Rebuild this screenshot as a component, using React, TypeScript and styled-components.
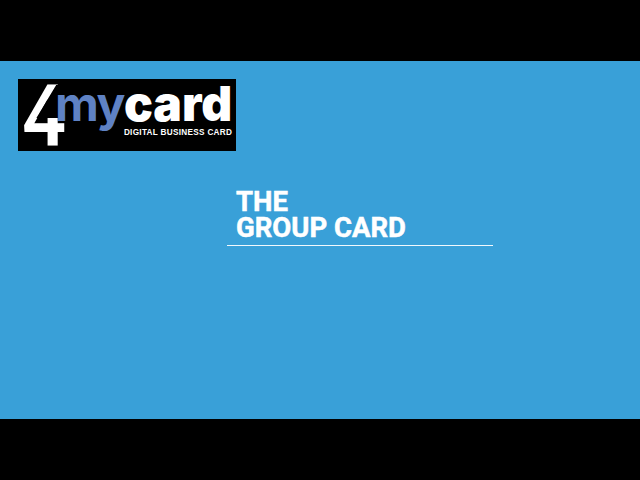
import React from "react";
import styled, { createGlobalStyle } from "styled-components";

const GlobalStyle = createGlobalStyle`
    html, body {
        margin: 0;
        padding: 0;
        background: #000;
    }
`;

const Page = styled.div`
    display: flex;
    flex-direction: column;
    width: 640px;
    height: 480px;
    overflow: hidden;
    background: #000;
`;

const Stage = styled.div`
    display: flex;
    flex-direction: column;
    box-sizing: border-box;
    margin: 61px 0;
    height: 358px;
    padding: 18px;
    background: #39a0d8;
`;

const Logo = styled.div`
    display: flex;
    align-items: flex-start;
    box-sizing: border-box;
    width: 218px;
    height: 72px;
    padding-left: 4px;
    background: #000;
    overflow: hidden;
`;

/* real "4" with the counter cut open, like the logo's open numeral */
const Four = styled.span`
    font-family: "Roboto", sans-serif;
    font-weight: 600;
    font-size: 86px;
    line-height: 72px;
    margin-top: 1px;
    color: #fff;
    width: 33px;
    flex: none;
    transform: scaleX(0.9);
    transform-origin: left center;
    clip-path: polygon(-10px -10px, 60px -10px, 60px 5px, 38px 5px, 16px 38px, 60px 38px, 60px 90px, -10px 90px);
`;

const Wordmark = styled.div`
    display: flex;
    flex-direction: column;
    align-items: flex-end;
    flex: 1;
    padding-right: 4px;
`;

const Words = styled.div`
    font-family: "Inter", sans-serif;
    font-weight: 900;
    font-size: 48px;
    line-height: 44px;
    margin-top: 3px;
    white-space: nowrap;
`;

const My = styled.span`
    color: #5f82c4;
    font-weight: 700;
    letter-spacing: -1.5px;
`;

const Card = styled.span`
    color: #fff;
`;

const Tagline = styled.div`
    font-family: "Liberation Sans", sans-serif;
    font-weight: 700;
    font-size: 8.2px;
    line-height: 10px;
    margin-top: 2px;
    letter-spacing: 0.3px;
    color: #fff;
    white-space: nowrap;
`;

const TitleBlock = styled.div`
    width: 266px;
    margin: 38px 0 0 209px;
    border-bottom: 1px solid #f0f8fd;
    padding: 0 0 4px 9px;
    box-sizing: border-box;
`;

const Title = styled.h1`
    margin: 0;
    font-family: "Roboto", sans-serif;
    font-weight: 700;
    font-size: 27.5px;
    line-height: 26px;
    color: #fff;
    -webkit-text-stroke: 0.5px #fff;
`;

export default function App() {
    return (
        <Page>
            <GlobalStyle />
            <Stage>
                <Logo>
                    <Four>4</Four>
                    <Wordmark>
                        <Words>
                            <My>my</My>
                            <Card>card</Card>
                        </Words>
                        <Tagline>DIGITAL BUSINESS CARD</Tagline>
                    </Wordmark>
                </Logo>
                <TitleBlock>
                    <Title>
                        THE
                        <br />
                        GROUP CARD
                    </Title>
                </TitleBlock>
            </Stage>
        </Page>
    );
}
